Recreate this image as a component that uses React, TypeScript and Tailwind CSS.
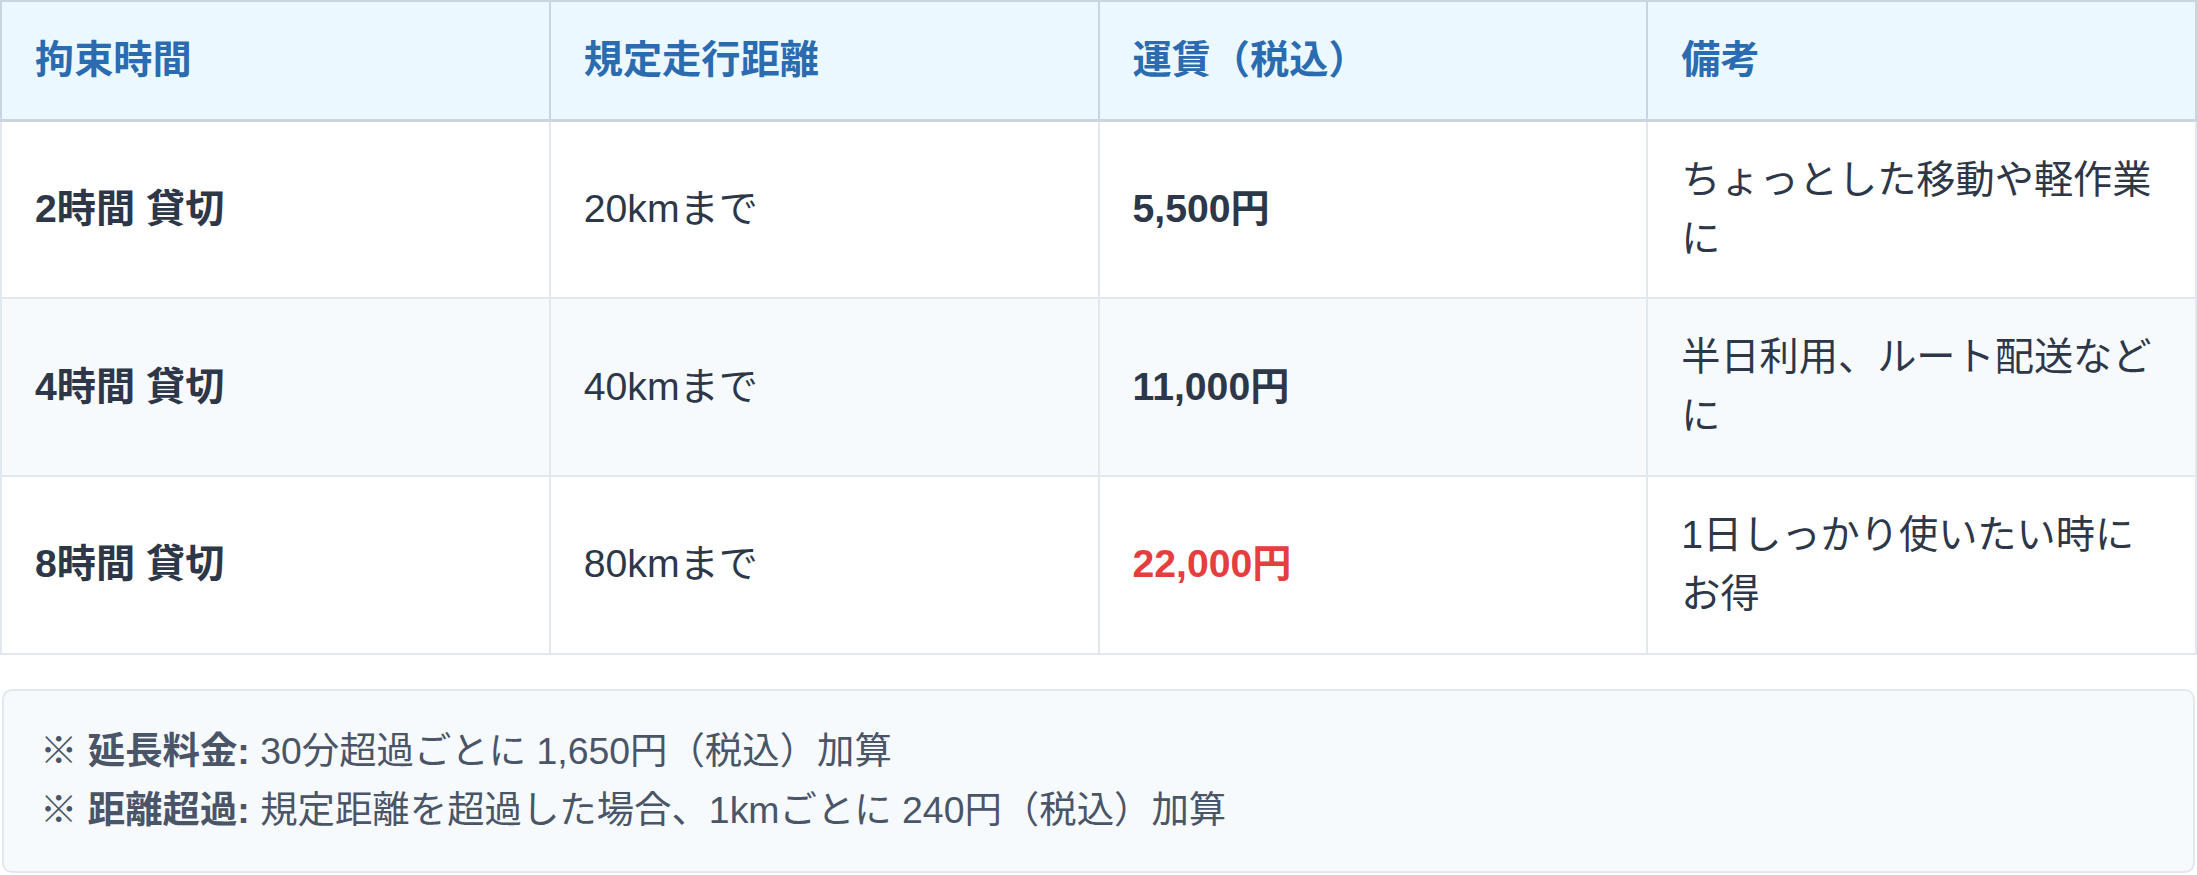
const rows = [
  { time: "2時間 貸切", distance: "20kmまで", price: "5,500円", note: "ちょっとした移動や軽作業に", highlight: false },
  { time: "4時間 貸切", distance: "40kmまで", price: "11,000円", note: "半日利用、ルート配送などに", highlight: false },
  { time: "8時間 貸切", distance: "80kmまで", price: "22,000円", note: "1日しっかり使いたい時にお得", highlight: true },
];

const headers = ["拘束時間", "規定走行距離", "運賃（税込）", "備考"];

const App = () => (
  <div className="min-h-screen bg-white font-['Liberation_Sans','Noto_Sans_CJK_JP',sans-serif] text-[#2d3748]">
    {/* Pricing table */}
    <table className="w-full table-fixed border-collapse text-left text-[39.2px] leading-[1.5]">
      <thead>
        <tr className="bg-[#ebf8ff]">
          {headers.map((h) => (
            <th
              key={h}
              className="border-2 border-b-[3px] border-[#cbd5e0] px-[33px] py-[29px] font-bold text-[#2b6cb0]"
            >
              {h}
            </th>
          ))}
        </tr>
      </thead>
      <tbody>
        {rows.map((r, i) => (
          <tr key={r.time} className={i % 2 === 1 ? "bg-[#f7fafc]" : "bg-white"}>
            <td className="border-2 border-[#e2e8f0] px-[33px] py-[29px] font-bold">{r.time}</td>
            <td className="border-2 border-[#e2e8f0] px-[33px] py-[29px]">{r.distance}</td>
            <td
              className={`border-2 border-[#e2e8f0] px-[33px] py-[29px] font-bold ${
                r.highlight ? "text-[#e53e3e]" : ""
              }`}
            >
              {r.price}
            </td>
            <td className="border-2 border-[#e2e8f0] px-[33px] py-[29px]">{r.note}</td>
          </tr>
        ))}
      </tbody>
    </table>

    {/* Notes */}
    <div className="mx-[2px] mt-[34px] rounded-[10px] border-2 border-[#e2e8f0] bg-[#f7fafc] px-[36px] py-[31px] text-[37.4px] leading-[59px] text-[#4a5568]">
      <p>
        ※ <strong className="font-bold">延長料金:</strong> 30分超過ごとに 1,650円（税込）加算
      </p>
      <p>
        ※ <strong className="font-bold">距離超過:</strong> 規定距離を超過した場合、1kmごとに 240円（税込）加算
      </p>
    </div>
  </div>
);

export default App;
